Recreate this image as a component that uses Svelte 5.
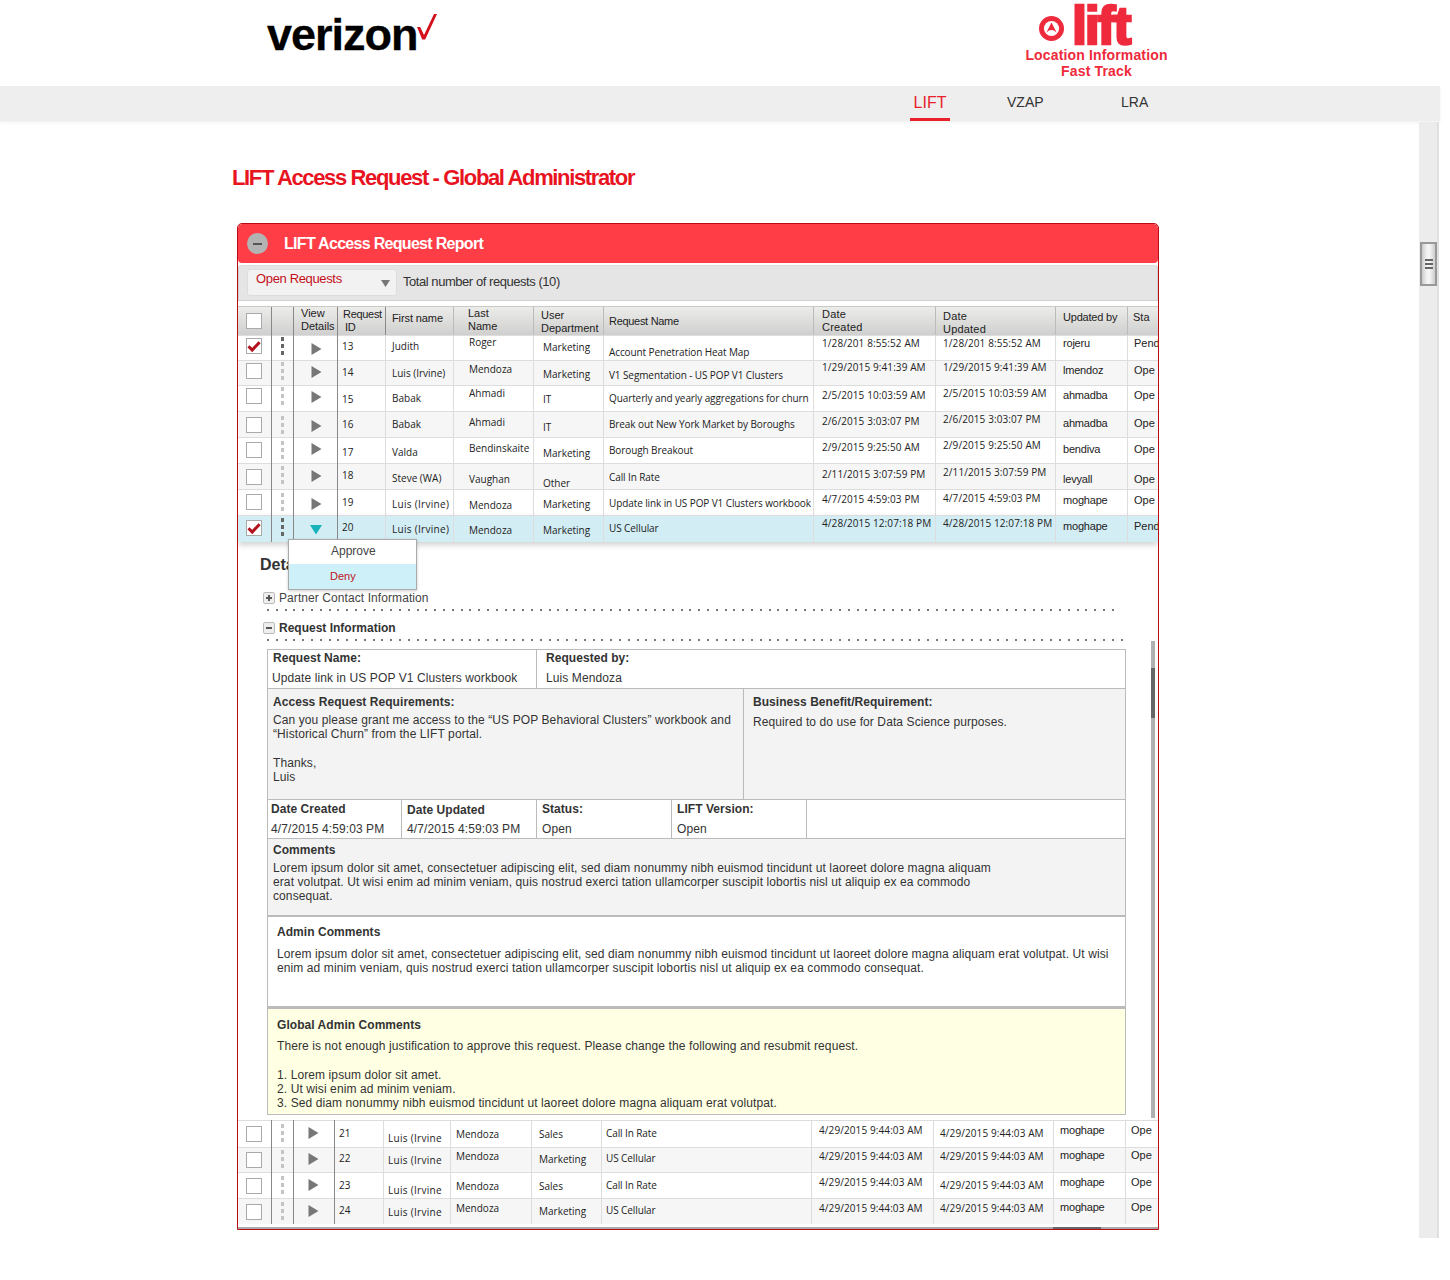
<script>
  // y values are the vertical centre of each cell's text on the page
  const topRows = [
    { top: 335, h: 25, alt: false, on: true, ck: 338, dots: 346, tri: 348,
      c: [['13',346],['Judith',346],['Roger',342],['Marketing',347],['Account Penetration Heat Map',352],['1/28/201 8:55:52 AM',343],['1/28/201 8:55:52 AM',343],['rojeru',343],['Pend',343]] },
    { top: 360, h: 25, alt: true, ck: 363, dots: 371, tri: 371,
      c: [['14',372],['Luis (Irvine)',373],['Mendoza',369],['Marketing',374],['V1 Segmentation - US POP V1 Clusters',375],['1/29/2015 9:41:39 AM',367],['1/29/2015 9:41:39 AM',367],['lmendoz',370],['Ope',370]] },
    { top: 385, h: 26, alt: false, ck: 388, dots: 396, tri: 396,
      c: [['15',399],['Babak',398],['Ahmadi',393],['IT',399],['Quarterly and yearly aggregations for churn',398],['2/5/2015 10:03:59 AM',395],['2/5/2015 10:03:59 AM',393],['ahmadba',395],['Ope',395]] },
    { top: 411, h: 26, alt: true, ck: 417, dots: 425, tri: 425,
      c: [['16',424],['Babak',424],['Ahmadi',422],['IT',427],['Break out New York Market by Boroughs',424],['2/6/2015 3:03:07 PM',421],['2/6/2015 3:03:07 PM',419],['ahmadba',423],['Ope',423]] },
    { top: 437, h: 26, alt: false, ck: 442, dots: 450, tri: 448,
      c: [['17',452],['Valda',452],['Bendinskaite',448],['Marketing',453],['Borough Breakout',450],['2/9/2015 9:25:50 AM',447],['2/9/2015 9:25:50 AM',445],['bendiva',449],['Ope',449]] },
    { top: 463, h: 26, alt: true, ck: 469, dots: 475, tri: 475,
      c: [['18',475],['Steve (WA)',478],['Vaughan',479],['Other',483],['Call In Rate',477],['2/11/2015 3:07:59 PM',474],['2/11/2015 3:07:59 PM',472],['levyall',479],['Ope',479]] },
    { top: 489, h: 26, alt: false, wide: true, ck: 494, dots: 502, tri: 503,
      c: [['19',502],['Luis (Irvine)',504],['Mendoza',505],['Marketing',504],['Update link in US POP V1 Clusters workbook',503],['4/7/2015 4:59:03 PM',499],['4/7/2015 4:59:03 PM',498],['moghape',500],['Ope',500]] },
    { top: 515, h: 27, sel: true, on: true, wide: true, ck: 520, dots: 527, tri: 529,
      c: [['20',527],['Luis (Irvine)',529],['Mendoza',530],['Marketing',530],['US Cellular',528],['4/28/2015 12:07:18 PM',523],['4/28/2015 12:07:18 PM',523],['moghape',526],['Pend',526]] }
  ];
  const bottomRows = [
    { top: 1120, h: 27, alt: false, wide: true, ck: 1126, dots: 1133, tri: 1132,
      c: [['21',1133],['Luis (Irvine',1138],['Mendoza',1134],['Sales',1134],['Call In Rate',1133],['4/29/2015 9:44:03 AM',1130],['4/29/2015 9:44:03 AM',1133],['moghape',1130],['Ope',1130]] },
    { top: 1147, h: 25, alt: true, wide: true, ck: 1152, dots: 1159, tri: 1158,
      c: [['22',1158],['Luis (Irvine',1160],['Mendoza',1156],['Marketing',1159],['US Cellular',1158],['4/29/2015 9:44:03 AM',1156],['4/29/2015 9:44:03 AM',1156],['moghape',1155],['Ope',1155]] },
    { top: 1172, h: 26, alt: false, wide: true, ck: 1178, dots: 1185, tri: 1184,
      c: [['23',1185],['Luis (Irvine',1190],['Mendoza',1186],['Sales',1186],['Call In Rate',1185],['4/29/2015 9:44:03 AM',1182],['4/29/2015 9:44:03 AM',1185],['moghape',1182],['Ope',1182]] },
    { top: 1198, h: 26, alt: true, wide: true, ck: 1204, dots: 1211, tri: 1210,
      c: [['24',1210],['Luis (Irvine',1212],['Mendoza',1208],['Marketing',1211],['US Cellular',1210],['4/29/2015 9:44:03 AM',1208],['4/29/2015 9:44:03 AM',1208],['moghape',1207],['Ope',1207]] }
  ];
  const colClass = ['id','fn','ln','dp','nm','dc','du','by','st'];
</script>

{#snippet tableRow(r, bottom)}
  <div class="row" class:bottom class:alt={r.alt} class:sel={r.sel} class:wide={r.wide} style="height:{r.h}px">
    <div class="cell dark ckc">
      <span class="box" style="margin-top:{r.ck - r.top}px">
        {#if r.on}
          <svg width="14" height="14" viewBox="0 0 14 14"><path d="M1.5 7.2 L5.2 11 L12.6 3.2" fill="none" stroke="#b3121d" stroke-width="3"/></svg>
        {/if}
      </span>
    </div>
    <div class="cell dark dc3">
      <span class="dots" class:solid={r.on} style="margin-top:{r.dots - r.top - 9}px"><i></i><i></i><i></i></span>
    </div>
    <div class="cell dark arw">
      {#if r.sel}
        <svg class="tri" style="margin-top:{r.tri - r.top - 4}px" width="14" height="10" viewBox="0 0 14 10"><path d="M1 0 H13 L7 9.5 Z" fill="#17b3ba"/></svg>
      {:else}
        <svg class="tri" style="margin-top:{r.tri - r.top - 6}px" width="11" height="14" viewBox="0 0 11 14"><path d="M0.5 1 L10.5 7 L0.5 13 Z" fill="#777"/></svg>
      {/if}
    </div>
    {#each r.c as cell, i}
      <div class="cell {colClass[i]}" style="padding-top:{cell[1] - r.top - 7}px">{cell[0]}</div>
    {/each}
  </div>
{/snippet}

<div class="page">
  <header class="brand">
    <div class="vz">
      <span class="vzword">verizon</span>
      <svg class="vzcheck" width="20" height="26" viewBox="0 0 20 26"><path d="M0 13 H3.2 L7 21 L17 0 H20 L8.2 25.4 H5.2 Z" fill="#d3111d"/></svg>
    </div>
    <div class="lift">
      <div class="liftmark">
        <svg width="25" height="25" viewBox="0 0 25 25">
          <circle cx="12.5" cy="12.5" r="12.5" fill="#ee2a3c"/>
          <circle cx="12.5" cy="12.5" r="7.6" fill="#fff"/>
          <path d="M12.5 6.4 L17.6 16.4 Q12.5 11.8 7.4 16.4 Z" fill="#ee2a3c"/>
        </svg>
        <span class="liftword">lift</span>
      </div>
      <div class="liftsub">Location Information<br />Fast Track</div>
    </div>
  </header>

  <nav class="nav">
    <span class="tab active">LIFT</span>
    <span class="tab vzap">VZAP</span>
    <span class="tab lra">LRA</span>
  </nav>

  <div class="body">
    <main class="main">
      <h1 class="title">LIFT Access Request - Global Administrator</h1>

      <section class="panel">
        <div class="phead">
          <span class="collapse"><i></i></span>
          <span class="ptitle">LIFT Access Request Report</span>
        </div>
        <div class="tools">
          <div class="select">
            <span>Open Requests</span>
            <svg width="9" height="7" viewBox="0 0 9 7"><path d="M0 0 H9 L4.5 7 Z" fill="#777"/></svg>
          </div>
          <span class="total">Total number of requests (10)</span>
        </div>

        <div class="thead">
          <div class="th dark ckc"><span class="box hbox"></span></div>
          <div class="th dark"></div>
          <div class="th dark vd">View<br />Details</div>
          <div class="th dark rq">Request<br /><span>ID</span></div>
          <div class="th mid fnh">First name</div>
          <div class="th ll">Last<br />Name</div>
          <div class="th ud">User<br />Department</div>
          <div class="th mid rn">Request Name</div>
          <div class="th dd">Date<br />Created</div>
          <div class="th dd low">Date<br />Updated</div>
          <div class="th mid ub">Updated by</div>
          <div class="th mid sta">Sta</div>
        </div>

        {#each topRows as r}
          {@render tableRow(r, false)}
        {/each}

        <div class="details">
          <div class="menu">
            <div class="mi">Approve</div>
            <div class="mi deny">Deny</div>
          </div>
          <div class="dtitle">Details</div>

          <div class="acc first"><span class="pm"><i></i><b></b></span><span class="acct">Partner Contact Information</span></div>
          <div class="dotted short"></div>
          <div class="acc"><span class="pm"><i></i></span><span class="acct strong">Request Information</span></div>
          <div class="dotted"></div>

          <div class="sheet">
            <div class="r ra">
              <div class="w268"><div class="lbl">Request Name:</div><div class="txt val nudge">Update link in US POP V1 Clusters workbook</div></div>
              <div class="grow pl9"><div class="lbl">Requested by:</div><div class="txt val">Luis Mendoza</div></div>
            </div>
            <div class="r rb">
              <div class="w475">
                <div class="lbl">Access Request Requirements:</div>
                <div class="txt gap4">Can you please grant me access to the “US POP Behavioral Clusters” workbook and<br />“Historical Churn” from the LIFT portal.<br /><br />Thanks,<br />Luis</div>
              </div>
              <div class="grow pl9">
                <div class="lbl">Business Benefit/Requirement:</div>
                <div class="txt gap6">Required to do use for Data Science purposes.</div>
              </div>
            </div>
            <div class="r rc">
              <div class="dcol c1"><div class="lbl">Date Created</div><div class="txt val">4/7/2015 4:59:03 PM</div></div>
              <div class="dcol c2"><div class="lbl low1">Date Updated</div><div class="txt val">4/7/2015 4:59:03 PM</div></div>
              <div class="dcol c2"><div class="lbl">Status:</div><div class="txt val">Open</div></div>
              <div class="dcol c2"><div class="lbl">LIFT Version:</div><div class="txt val">Open</div></div>
              <div class="grow"></div>
            </div>
            <div class="r rd">
              <div class="lbl">Comments</div>
              <div class="txt gap4">Lorem ipsum dolor sit amet, consectetuer adipiscing elit, sed diam nonummy nibh euismod tincidunt ut laoreet dolore magna aliquam<br />erat volutpat. Ut wisi enim ad minim veniam, quis nostrud exerci tation ullamcorper suscipit lobortis nisl ut aliquip ex ea commodo<br />consequat.</div>
            </div>
            <div class="r re">
              <div class="lbl">Admin Comments</div>
              <div class="txt gap8">Lorem ipsum dolor sit amet, consectetuer adipiscing elit, sed diam nonummy nibh euismod tincidunt ut laoreet dolore magna aliquam erat volutpat. Ut wisi<br />enim ad minim veniam, quis nostrud exerci tation ullamcorper suscipit lobortis nisl ut aliquip ex ea commodo consequat.</div>
            </div>
            <div class="r rf">
              <div class="lbl">Global Admin Comments</div>
              <div class="txt gap7">There is not enough justification to approve this request. Please change the following and resubmit request.<br /><br />1. Lorem ipsum dolor sit amet.<br />2. Ut wisi enim ad minim veniam.<br />3. Sed diam nonummy nibh euismod tincidunt ut laoreet dolore magna aliquam erat volutpat.</div>
            </div>
          </div>

          <div class="vbar"><i></i></div>
        </div>

        {#each bottomRows as r}
          {@render tableRow(r, true)}
        {/each}

        <div class="hbar"><i></i></div>
      </section>
    </main>

    <aside class="pagebar">
      <div class="thumb"><i></i><i></i><i></i></div>
    </aside>
  </div>
</div>

<style>
  :global(body) { background: #fff; }
  * { box-sizing: border-box; }
  .page { width: 1440px; font-family: "Liberation Sans", Arial, sans-serif; color: #333; }

  /* brand */
  .brand { height: 86px; display: flex; justify-content: space-between; padding: 0 272px 0 267px; }
  .vz { display: flex; align-items: flex-start; }
  .vzword { width: 150px; margin-top: 12px; font-size: 45px; line-height: 46px; font-weight: 700; letter-spacing: -1px; color: #000; white-space: nowrap; -webkit-text-stroke: .3px #000; }
  .vzcheck { margin-top: 14px; }
  .lift { width: 143px; }
  .liftmark { display: flex; align-items: flex-start; gap: 8px; margin-left: 14px; height: 47px; }
  .liftmark svg { margin-top: 16px; }
  .liftword { margin-top: 3px; font-size: 54px; line-height: 44px; font-weight: 700; letter-spacing: -2.2px; color: #ee2a3c; -webkit-text-stroke: 2.5px #ee2a3c; }
  .liftsub { font-size: 14px; line-height: 16px; font-weight: 700; color: #ee2a3c; text-align: center; letter-spacing: .15px; white-space: nowrap; }

  /* nav */
  .nav { height: 35px; background: #eee; display: flex; padding-left: 910px; box-shadow: 0 2px 3px rgba(0,0,0,.05); font-size: 14px; color: #333; }
  .tab { line-height: 32px; height: 35px; }
  .active { width: 40px; text-align: center; color: #e8212b; font-size: 16px; line-height: 33px; border-bottom: 3px solid #e8212b; }
  .vzap { margin-left: 57px; width: 36px; }
  .lra { margin-left: 78px; }

  /* frame */
  .body { display: flex; align-items: flex-start; }
  .main { width: 1419px; padding-left: 232px; }
  .title { margin: 43px 0 31px; font-size: 22px; line-height: 28px; font-weight: 700; letter-spacing: -1.36px; color: #e8141f; white-space: nowrap; }
  .pagebar { width: 20px; height: 1116px; margin-top: 1px; padding: 120px 0 0 1px; background: #ececec; border-right: 2px solid #e0e0e0; position: relative; z-index: 1; }
  .thumb { width: 17px; height: 44px; border: 2px solid #999; background: linear-gradient(90deg, #ccc, #f4f4f4 40%, #f4f4f4 60%, #ccc); display: flex; flex-direction: column; align-items: center; justify-content: center; gap: 2px; }
  .thumb i { display: block; width: 8px; height: 2px; background: #666; }

  .panel { width: 922px; margin-left: 5px; height: 1007px; border: 1px solid #b80b13; border-radius: 5px 5px 0 0; overflow: hidden; background: #fff; }
  .phead { height: 39px; background: #ff3d47; border-radius: 4px; display: flex; align-items: center; padding-left: 9px; }
  .collapse { width: 21px; height: 21px; border-radius: 50%; background: #b3b3b3; display: flex; align-items: center; justify-content: center; }
  .collapse i { display: block; width: 9px; height: 2px; background: #555; }
  .ptitle { margin-left: 16px; font-size: 16px; font-weight: 700; letter-spacing: -.7px; color: #fff; white-space: nowrap; }
  .tools { height: 36px; margin: 2px 0 5px; background: #e5e5e5; border: 1px solid #d0d0d0; border-top-color: #ddd; border-radius: 3px 3px 0 0; display: flex; padding: 3px 0 0 8px; }
  .select { width: 150px; height: 27px; background: #f2f2f2; border: 1px solid #ddd; border-radius: 3px; padding: 1px 0 0 8px; display: flex; justify-content: space-between; font-size: 13px; line-height: 16px; letter-spacing: -.35px; color: #c4101a; }
  .select svg { margin: 9px 6px 0 0; }
  .total { margin: 5px 0 0 6px; font-size: 13px; line-height: 16px; letter-spacing: -.45px; color: #333; white-space: nowrap; }

  /* tables */
  .thead, .row { display: grid; grid-template-columns: 34px 22px 44px 48px 68px 80px 70px 210px 122px 120px 72px 30px; }
  .row.bottom { grid-template-columns: 34px 22px 41px 49px 67px 81px 70px 210px 122px 120px 72px 32px; }
  .thead { height: 29px; background: linear-gradient(#ecece9, #cfcfcf); border-top: 1px solid #c9c9c6; font-size: 11px; line-height: 13px; color: #222; }
  .th { border-right: 1px solid #bbb; padding: 0 0 0 7px; white-space: nowrap; overflow: hidden; }
  .th.dark { border-right-color: #888; }
  .th.ckc { padding: 6px 0 0 8px; }
  .hbox { background: #fff; }
  .vd { padding-left: 7px; }
  .rq { padding: 1px 0 0 5px; letter-spacing: -.3px; }
  .rq span { padding-left: 2px; }
  .mid { padding-top: 4px; }
  .fnh { padding: 5px 0 0 6px; letter-spacing: -.1px; }
  .ll { padding-left: 14px; }
  .ud { padding: 2px 0 0 7px; }
  .rn { padding: 8px 0 0 5px; letter-spacing: -.3px; }
  .dd { padding: 1px 0 0 8px; letter-spacing: .2px; }
  .low { padding: 3px 0 0 7px; }
  .ub { letter-spacing: -.2px; }
  .sta { border-right: 0; padding-left: 5px; }

  .row { background: #fff; border-top: 1px solid #ddd; font-family: "Open Sans", sans-serif; font-size: 10px; line-height: 14px; color: #222; }
  .row.alt { background: #f6f6f6; }
  .row.sel { background: #d3edf5; box-shadow: 0 3px 6px rgba(0,0,0,.18); position: relative; z-index: 1; }
  .cell { border-right: 1px solid #ddd; margin-top: -1px; white-space: nowrap; overflow: hidden; }
  .cell.dark { border-right-color: #888; }
  .ckc { padding-left: 8px; }
  .box { display: block; width: 16px; height: 16px; background: #fff; border: 1px solid #aaa; }
  .box svg { display: block; margin: 0; }
  .dc3 { padding-left: 9px; }
  .dots { display: flex; flex-direction: column; gap: 3px; width: 4px; }
  .dots i { display: block; width: 3px; height: 4px; background: #c4c4c4; }
  .dots.solid i { background: #666; }
  .arw { padding-left: 17px; }
  .row.bottom .arw { padding-left: 14px; }
  .tri { display: block; }
  .row.sel .tri { margin-left: -2px; }

  .id { padding-left: 4px; }
  .fn { padding-left: 6px; }
  .ln { padding-left: 15px; }
  .dp { padding-left: 9px; }
  .nm { padding-left: 5px; letter-spacing: -.1px; }
  .dc { padding-left: 8px; letter-spacing: .1px; }
  .du { padding-left: 7px; letter-spacing: .1px; }
  .by { padding-left: 7px; font-family: "Liberation Sans", sans-serif; font-size: 11px; letter-spacing: -.2px; }
  .st { padding-left: 6px; border-right: 0; font-family: "Liberation Sans", sans-serif; font-size: 11px; }
  .row.wide .fn { letter-spacing: .3px; }
  .row.bottom .id { padding-left: 4px; }
  .row.bottom .fn { padding-left: 4px; }
  .row.bottom .ln { padding-left: 5px; }
  .row.bottom .dp { padding-left: 7px; }
  .row.bottom .nm { padding-left: 4px; }
  .row.bottom .dc { padding-left: 7px; }
  .row.bottom .du { padding-left: 6px; }
  .row.bottom .by { padding-left: 6px; }
  .row.bottom .st { padding-left: 5px; }

  /* details */
  .details { position: relative; height: 578px; background: #fff; }
  .dtitle { padding: 15px 0 0 22px; font-size: 16px; line-height: 16px; font-weight: 700; color: #333; }
  .menu { position: absolute; left: 50px; top: -3px; width: 129px; height: 51px; background: #fff; border: 1px solid #aaa; box-shadow: 0 1px 3px rgba(0,0,0,.2); z-index: 3; }
  .mi { height: 24px; padding-left: 42px; font-size: 12px; line-height: 22px; color: #444; }
  .mi.deny { height: 25px; background: #cdf0f9; padding-left: 41px; font-size: 11px; line-height: 24px; color: #c4101a; }
  .acc { display: flex; align-items: center; gap: 4px; height: 12px; margin: 11px 0 0 25px; font-size: 12px; line-height: 12px; letter-spacing: .08px; color: #444; }
  .acc.first { margin-top: 19px; }
  .pm { position: relative; display: block; width: 12px; height: 12px; background: #eee; border: 1px solid #bbb; border-radius: 2px; }
  .pm i { position: absolute; left: 2px; top: 4px; width: 6px; height: 2px; background: #555; }
  .pm b { position: absolute; left: 4px; top: 2px; width: 2px; height: 6px; background: #555; }
  .strong { font-weight: 700; color: #333; letter-spacing: 0; }
  .dotted { height: 2px; margin: 5px 0 0 29px; width: 858px; background: repeating-linear-gradient(90deg, #777 0 2px, transparent 2px 8.8px); }
  .dotted.short { width: 850px; }
  .sheet { width: 859px; height: 466px; margin: 8px 0 0 29px; border: 1px solid #bbb; font-size: 12px; color: #333; }
  .r { display: flex; border-bottom: 1px solid #bbb; }
  .lbl { font-weight: 700; line-height: 14px; white-space: nowrap; letter-spacing: .05px; }
  .txt { line-height: 14px; white-space: nowrap; letter-spacing: .1px; }
  .val { margin-top: 6px; }
  .nudge { margin-left: -1px; }
  .gap4 { margin-top: 4px; }
  .gap6 { margin-top: 6px; }
  .gap7 { margin-top: 7px; }
  .gap8 { margin-top: 8px; }
  .grow { flex: 1; }
  .pl9 { padding-left: 9px; }
  .ra { height: 39px; padding-top: 1px; }
  .w268 { width: 269px; padding-left: 5px; border-right: 1px solid #bbb; margin-top: -1px; padding-top: 1px; }
  .ra .grow { margin-top: -1px; padding-top: 1px; }
  .rb { height: 111px; background: #f3f3f3; }
  .w475 { width: 476px; padding: 6px 0 0 5px; border-right: 1px solid #bbb; }
  .rb .grow { padding-top: 6px; }
  .rb .txt { line-height: 14.3px; }
  .rc { height: 39px; }
  .dcol { padding: 2px 0 0 3px; border-right: 1px solid #bbb; }
  .c1 { width: 134px; }
  .c2 { width: 135px; padding-left: 5px; }
  .low1 { padding-top: 1px; margin-bottom: -1px; }
  .rd { display: block; height: 78px; padding: 4px 0 0 5px; background: #f3f3f3; border-bottom-width: 2px; }
  .re { display: block; height: 92px; padding: 8px 0 0 9px; border-bottom-width: 3px; }
  .rf { display: block; height: 105px; padding: 9px 0 0 9px; background: #ffffe3; border-bottom: 0; }
  .rf .txt { line-height: 14.3px; }
  .vbar { position: absolute; left: 913px; top: 99px; width: 4px; height: 477px; background: #b0b0b0; }
  .vbar i { display: block; margin-top: 27px; width: 4px; height: 50px; background: #666; float: left; }
  .hbar { height: 2px; margin-top: 3px; background: #aaa; }
  .hbar i { display: block; height: 2px; width: 48px; margin-left: 815px; background: #666; }
</style>
